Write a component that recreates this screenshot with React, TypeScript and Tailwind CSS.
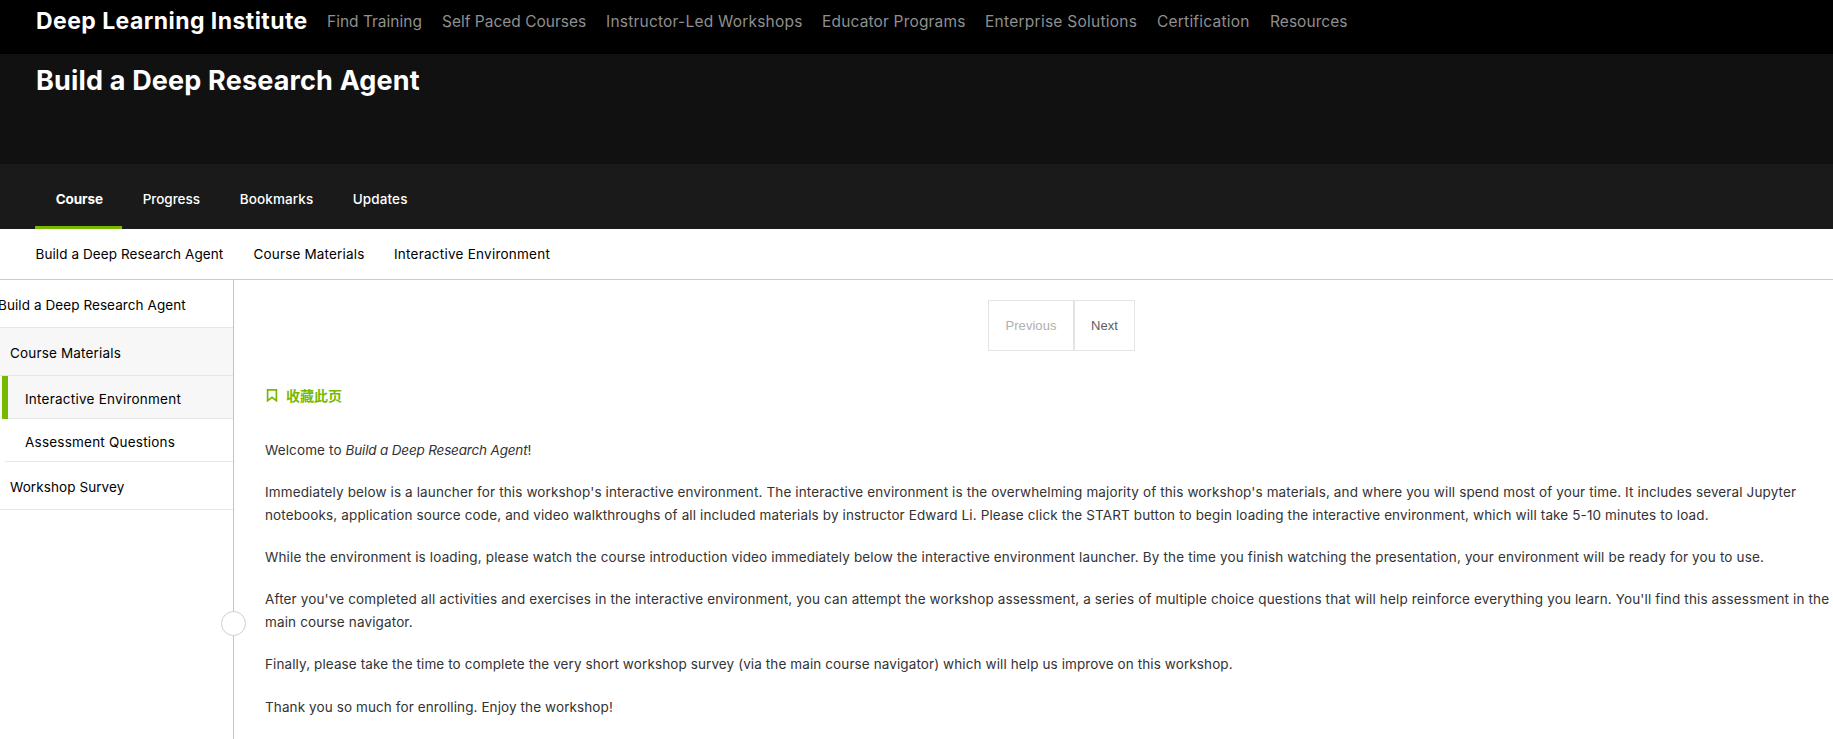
const navItems = [
  { label: "Find Training", cell: "w-[115px] tracking-[0px]" },
  { label: "Self Paced Courses", cell: "w-[164px] tracking-[0px]" },
  { label: "Instructor-Led Workshops", cell: "w-[216px] tracking-[0.22px]" },
  { label: "Educator Programs", cell: "w-[163px] tracking-[0.17px]" },
  { label: "Enterprise Solutions", cell: "w-[172px] tracking-[0.26px]" },
  { label: "Certification", cell: "w-[113px] tracking-[0.22px]" },
  { label: "Resources", cell: "tracking-[0.05px]" },
];

const tabs = [
  { label: "Course", cell: "w-[87px] font-bold tracking-[-0.1px] border-[#76b900]" },
  { label: "Progress", cell: "w-[97px] font-medium tracking-[-0.05px] border-transparent" },
  { label: "Bookmarks", cell: "w-[113px] font-medium border-transparent" },
  { label: "Updates", cell: "w-[96px] font-medium border-transparent" },
];

function BookmarkIcon() {
  return (
    <svg width="12" height="14" viewBox="0 0 12 14" fill="none" stroke="#76b900" strokeWidth="1.7">
      <path d="M1.6 1.9H10.4V12.7L6 9.3L1.6 12.7Z" />
    </svg>
  );
}

function Header() {
  return (
    <header className="flex h-[54px] bg-black pl-[35px] leading-[42px]">
      <div className="w-[292px] pl-px whitespace-nowrap text-[23px] font-bold tracking-[0.44px] text-white">
        Deep Learning Institute
      </div>
      <nav className="flex pt-px text-[15.5px] text-[#8f8f8f]">
        {navItems.map((n) => (
          <a key={n.label} className={`whitespace-nowrap ${n.cell}`}>{n.label}</a>
        ))}
      </nav>
    </header>
  );
}

function Sidebar() {
  return (
    <aside className="relative w-[234px] shrink-0 border-r border-[#c4c4c4] text-black">
      <div className="h-12 border-b border-[#e7e7e7] leading-[51px] whitespace-nowrap">
        <span className="-ml-[2px] tracking-[0.08px]">Build a Deep Research Agent</span>
      </div>
      <div className="h-12 border-b border-[#e7e7e7] bg-[#f7f7f7] pl-[10px] leading-[50px] tracking-[0.17px]">Course Materials</div>
      <div className="h-[43px] bg-[#f7f7f7] pl-[2px]">
        <div className="h-[43px] border-l-[6px] border-[#76b900]">
          <div className="h-[43px] border-b border-[#e7e7e7] pl-[17px] leading-[46px] tracking-[0.24px]">Interactive Environment</div>
        </div>
      </div>
      <div className="ml-[5px] h-[43px] border-b border-[#e7e7e7] pl-5 leading-[46px] tracking-[0.22px]">Assessment Questions</div>
      <div className="h-12 border-b border-[#e7e7e7] pl-[10px] leading-[50px] tracking-[0.08px]">Workshop Survey</div>
      <div className="absolute top-[331px] -right-[13px] size-[25px] rounded-full border border-[#cfcfcf] bg-white" />
    </aside>
  );
}

export default function App() {
  return (
    <div className="flex h-[739px] w-full flex-col overflow-hidden bg-white font-['Inter','Noto_Sans_CJK_SC',sans-serif] text-[13.5px] tracking-[0.12px]">
      <Header />
      <section className="h-[110px] bg-[#111111] pl-[36px]">
        <h1 className="pt-[7px] text-[27px] leading-10 font-bold tracking-[0.17px] text-white">
          Build a Deep Research Agent
        </h1>
      </section>
      <nav className="flex h-[65px] bg-[#1a1a1a] pl-[35px] text-white">
        {tabs.map((t) => (
          <a key={t.label} className={`border-b-[3px] pl-[20.7px] leading-[71px] whitespace-nowrap ${t.cell}`}>{t.label}</a>
        ))}
      </nav>
      <div className="flex h-[51px] shrink-0 border-b border-[#cccccc] pl-[35.5px] leading-[51px] text-black">
        <span className="w-[218px] tracking-[0.08px]">Build a Deep Research Agent</span>
        <span className="w-[140.5px] tracking-[0.17px]">Course Materials</span>
        <span className="tracking-[0.24px]">Interactive Environment</span>
      </div>
      <div className="flex min-h-0 flex-1">
        <Sidebar />
        <main className="flex-1 pl-[31px] whitespace-nowrap text-[#333333]">
          <div className="flex h-[71px] pt-5 pl-[723px] font-['Liberation_Sans',sans-serif] text-[13px] leading-[49px] tracking-[0.05px]">
            <button className="h-[51px] w-[86px] border border-[#e7e3e0] text-center text-[#b0b0b0]">Previous</button>
            <button className="h-[51px] w-[61px] border border-[#e7e3e0] text-center text-[#5e5e5e]">Next</button>
          </div>
          <div className="mt-[34px] flex h-5 items-center gap-2 pl-px text-[14px] font-bold tracking-normal text-[#76b900]">
            <BookmarkIcon />
            <span>收藏此页</span>
          </div>
          <div className="mt-[34px] flex flex-col gap-[19px] leading-[23px]">
            <p>Welcome to <em className="tracking-[-0.17px]">Build a Deep Research Agent</em>!</p>
            <p className="tracking-[0.126px]">
              Immediately below is a launcher for this workshop's interactive environment. The interactive environment is the overwhelming majority of this workshop's materials, and where you will spend most of your time. It includes several Jupyter
              <br />
              notebooks, application source code, and video walkthroughs of all included materials by instructor Edward Li. Please click the START button to begin loading the interactive environment, which will take 5-10 minutes to load.
            </p>
            <p className="tracking-[0.151px]">While the environment is loading, please watch the course introduction video immediately below the interactive environment launcher. By the time you finish watching the presentation, your environment will be ready for you to use.</p>
            <p className="tracking-[0.14px]">
              After you've completed all activities and exercises in the interactive environment, you can attempt the workshop assessment, a series of multiple choice questions that will help reinforce everything you learn. You'll find this assessment in the
              <br />
              main course navigator.
            </p>
            <p className="tracking-[0.105px]">Finally, please take the time to complete the very short workshop survey (via the main course navigator) which will help us improve on this workshop.</p>
            <p className="mt-px tracking-[0.1px]">Thank you so much for enrolling. Enjoy the workshop!</p>
          </div>
        </main>
      </div>
    </div>
  );
}
